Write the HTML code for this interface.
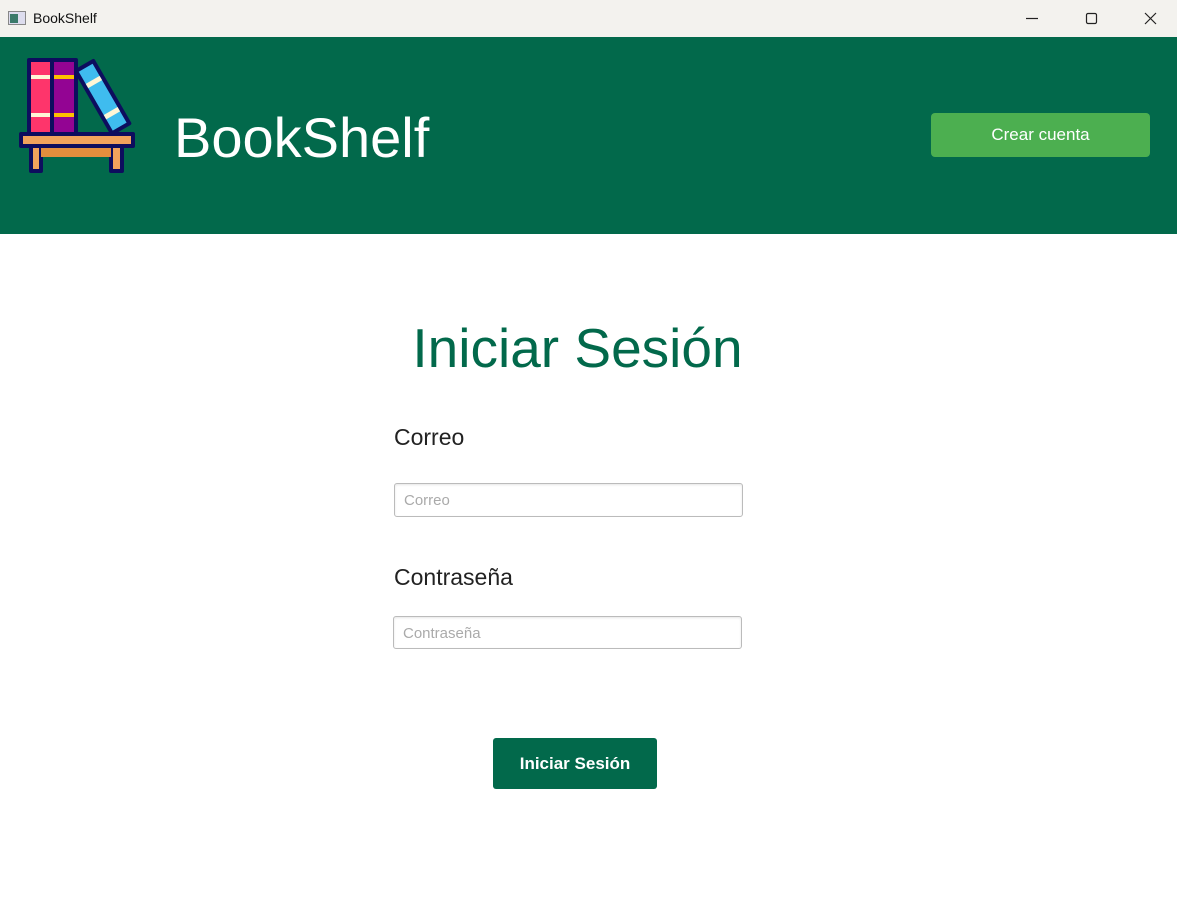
<!DOCTYPE html>
<html><head><meta charset="utf-8"><style>
body{margin:0;width:1177px;height:916px;background:#fff;font-family:"Liberation Sans",sans-serif;position:relative;overflow:hidden}
.tb{position:absolute;left:0;top:0;width:1177px;height:37px;background:#f3f2ee}
.tb span{position:absolute;left:33px;top:10px;font-size:14px;color:#111}
.hd{position:absolute;left:0;top:37px;width:1177px;height:197px;background:#02694b}
.brand{position:absolute;left:174px;top:68px;color:#fff;font-size:56px;font-weight:300}
.cc{position:absolute;left:931px;top:76px;width:219px;height:44px;background:#4caf50;border-radius:4px;color:#fff;font-size:17px;text-align:center;line-height:44px}
h1{position:absolute;left:0;width:1155px;text-align:center;top:316px;margin:0;font-weight:400;font-size:55px;color:#02694b}
.lb{position:absolute;left:394px;font-size:23px;color:#222}
.in{position:absolute;width:346px;height:31px;border:1px solid #bbb;border-radius:3px;box-sizing:border-box;font-size:15px;color:#aaa;padding:8px 0 0 9px;box-shadow:inset 0 1px 2px rgba(0,0,0,.1)}
.btn{position:absolute;left:493px;top:738px;width:164px;height:51px;background:#02694b;border-radius:3px;color:#fff;font-weight:bold;font-size:17px;text-align:center;line-height:51px}
</style></head><body>
<div class="tb">
<svg style="position:absolute;left:8px;top:11px" width="18" height="14"><rect x="0.5" y="0.5" width="17" height="13" fill="#dde" stroke="#888"/><rect x="2" y="3" width="8" height="9" fill="#3a7a6a"/></svg>
<span>BookShelf</span>
<svg style="position:absolute;left:1020px;top:10px" width="145" height="18" fill="none" stroke="#222" stroke-width="1.2"><line x1="6" y1="8.5" x2="18" y2="8.5"/><rect x="66.5" y="3.5" width="10" height="10" rx="1.5"/><path d="M125 3L136 14M136 3L125 14"/></svg>
</div>
<div class="hd">
<svg style="position:absolute;left:0;top:0" width="150" height="150" stroke="#0d0d5e" stroke-width="4" stroke-linejoin="round">
<rect x="29" y="23" width="23" height="75" fill="#fe356b"/>
<rect x="52" y="23" width="24" height="75" fill="#930493"/>
<rect x="31" y="38" width="19" height="4" fill="#fff6d6" stroke="none"/>
<rect x="31" y="76" width="19" height="4" fill="#fff6d6" stroke="none"/>
<rect x="54" y="38" width="20" height="4" fill="#fec000" stroke="none"/>
<rect x="54" y="76" width="20" height="4" fill="#fec000" stroke="none"/>
<g transform="translate(76 34) rotate(-30)"><rect x="0" y="0" width="20" height="72" fill="#3fbcef"/><rect x="2" y="16" width="16" height="5" fill="#fff6d6" stroke="none"/><rect x="2" y="52" width="16" height="5" fill="#fff6d6" stroke="none"/></g>
<rect x="31" y="108" width="10" height="26" fill="#f1a35c"/>
<rect x="111" y="108" width="11" height="26" fill="#f1a35c"/>
<rect x="41" y="110" width="70" height="10" fill="#e38e3d" stroke="none"/>
<rect x="21" y="97" width="112" height="12" fill="#f1a35c"/>
</svg>
<div class="brand">BookShelf</div>
<div class="cc">Crear cuenta</div>
</div>
<h1>Iniciar Sesión</h1>
<div class="lb" style="top:424px">Correo</div>
<div class="in" style="left:394px;top:483px;width:349px;height:34px">Correo</div>
<div class="lb" style="top:564px">Contraseña</div>
<div class="in" style="left:393px;top:616px;width:349px;height:33px">Contraseña</div>
<div class="btn">Iniciar Sesión</div>
</body></html>
